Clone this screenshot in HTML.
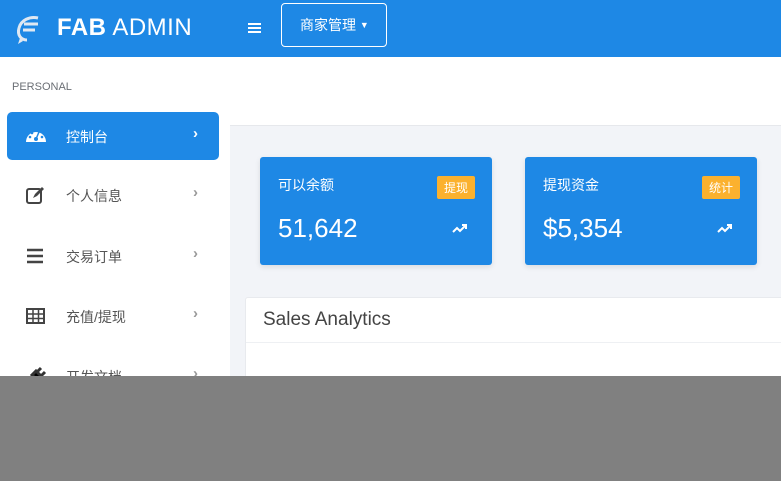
<!DOCTYPE html>
<html><head><meta charset="utf-8"><style>
*{margin:0;padding:0;box-sizing:border-box}
body{width:781px;height:481px;overflow:hidden;background:#f2f4f8;font-family:"Liberation Sans","Noto Sans CJK SC",sans-serif;position:relative}
.hdr{position:absolute;left:0;top:0;width:781px;height:57px;background:#1e88e5;box-shadow:0 2px 4px rgba(0,0,0,.15)}
.logo{position:absolute;left:57px;top:14px;color:#fff;font-size:24px;letter-spacing:.5px}
.side{position:absolute;left:0;top:57px;width:230px;height:424px;background:#fff}
.top2{position:absolute;left:230px;top:57px;width:551px;height:69px;background:#fff;border-bottom:1px solid #e6e8ec}
.item{position:absolute;left:7px;width:212px;height:48px;border-radius:5px;color:#555;font-size:14px}
.item .t{position:absolute;left:59px;top:15px}
.item .a{position:absolute;left:186px;top:13px;font-size:15px;font-weight:bold;color:#999}
.item svg{position:absolute;left:18px;top:14px}
.card{position:absolute;top:157px;width:232px;height:108px;background:#1e88e5;border-radius:3px;color:#fff;box-shadow:0 2px 6px rgba(0,0,0,.1)}
.card .l{position:absolute;left:18px;top:18px;font-size:14px}
.card .b{position:absolute;right:17px;top:19px;background:#fbb12e;font-size:12px;padding:3px 7px;border-radius:2px}
.card .n{position:absolute;left:18px;top:56px;font-size:26px}
.card svg{position:absolute;right:24px;top:66px}
.panel{position:absolute;left:245px;top:297px;width:540px;height:100px;background:#fff;border:1px solid #e8eaee;border-radius:3px}
.gray{position:absolute;left:0;top:376px;width:781px;height:105px;background:#808080}
</style></head><body>
<div class="hdr">
<svg style="position:absolute;left:14px;top:14px" width="28" height="32" viewBox="0 0 28 32"><path d="M24 4C16 2 7 6 5 14c-2 7 2 12 8 12" stroke="#dfe8f2" stroke-width="3" fill="none"/><path d="M10 10h14M9 16h12" stroke="#dfe8f2" stroke-width="3"/><path d="M6 24l-2 6 5-3" fill="#dfe8f2"/></svg>
<div class="logo"><b>FAB</b> ADMIN</div>
<div style="position:absolute;left:248px;top:23px;width:13px;height:2px;background:#fff;box-shadow:0 4px 0 #fff,0 8px 0 #fff"></div>
<div style="position:absolute;left:281px;top:3px;width:106px;height:44px;border:1px solid #fff;border-radius:4px;color:#fff;font-size:14px;padding:11px 0 0 18px">商家管理 <span style="font-size:9px;vertical-align:2px">▼</span></div>
</div>
<div class="side">
<div style="position:absolute;left:12px;top:24px;font-size:11px;color:#6b6f75">PERSONAL</div>
</div>
<div class="top2"></div>
<div class="item" style="top:112px;background:#1e88e5;color:#fff"><svg width="22" height="18" viewBox="0 0 22 18"><path d="M1 16A10 10 0 0 1 21 16Z" fill="#fff"/><circle cx="11" cy="13" r="2" fill="#1e88e5"/><path d="M11 13L14 6" stroke="#1e88e5" stroke-width="1.5"/><circle cx="5" cy="11" r="1.3" fill="#1e88e5"/><circle cx="7" cy="7" r="1.3" fill="#1e88e5"/><circle cx="17" cy="11" r="1.3" fill="#1e88e5"/></svg><span class="t">控制台</span><span class="a" style="color:#fff">›</span></div>
<div class="item" style="top:171px"><svg width="22" height="20" viewBox="0 0 22 20"><rect x="2" y="4" width="14" height="14" rx="2" fill="none" stroke="#444" stroke-width="2"/><path d="M8 13l2-4 7-7 2 2-7 7z" fill="#444"/></svg><span class="t">个人信息</span><span class="a">›</span></div>
<div class="item" style="top:232px"><svg width="22" height="20" viewBox="0 0 22 20"><path d="M2 4h16M2 10h16M2 16h16" stroke="#444" stroke-width="2.5"/></svg><span class="t">交易订单</span><span class="a">›</span></div>
<div class="item" style="top:292px"><svg width="22" height="20" viewBox="0 0 22 20"><rect x="2" y="3" width="17" height="14" fill="none" stroke="#444" stroke-width="2"/><path d="M2 8h17M2 12.5h17M8 3v14M13.5 3v14" stroke="#444" stroke-width="1.5"/></svg><span class="t">充值/提现</span><span class="a">›</span></div>
<div class="item" style="top:352px"><svg width="22" height="22" viewBox="0 0 22 22"><path d="M4 20l4-4M7 9l6 6 4-4-6-6zM12 6l4-4M16 10l4-4" stroke="#333" stroke-width="3"/></svg><span class="t">开发文档</span><span class="a">›</span></div>
<div class="card" style="left:260px"><span class="l">可以余额</span><span class="b">提现</span><span class="n">51,642</span><svg width="16" height="10" viewBox="0 0 16 10"><path d="M1 9l4-4 3 3 6-6M10 2h4v4" stroke="#fff" stroke-width="2" fill="none"/></svg></div>
<div class="card" style="left:525px"><span class="l">提现资金</span><span class="b">统计</span><span class="n">$5,354</span><svg width="16" height="10" viewBox="0 0 16 10"><path d="M1 9l4-4 3 3 6-6M10 2h4v4" stroke="#fff" stroke-width="2" fill="none"/></svg></div>
<div class="panel"><div style="position:absolute;left:17px;top:11px;font-size:19px;color:#444">Sales Analytics</div><div style="position:absolute;left:0;top:44px;width:100%;height:1px;background:#eef0f3"></div></div>
<div class="gray"></div>
</body></html>
